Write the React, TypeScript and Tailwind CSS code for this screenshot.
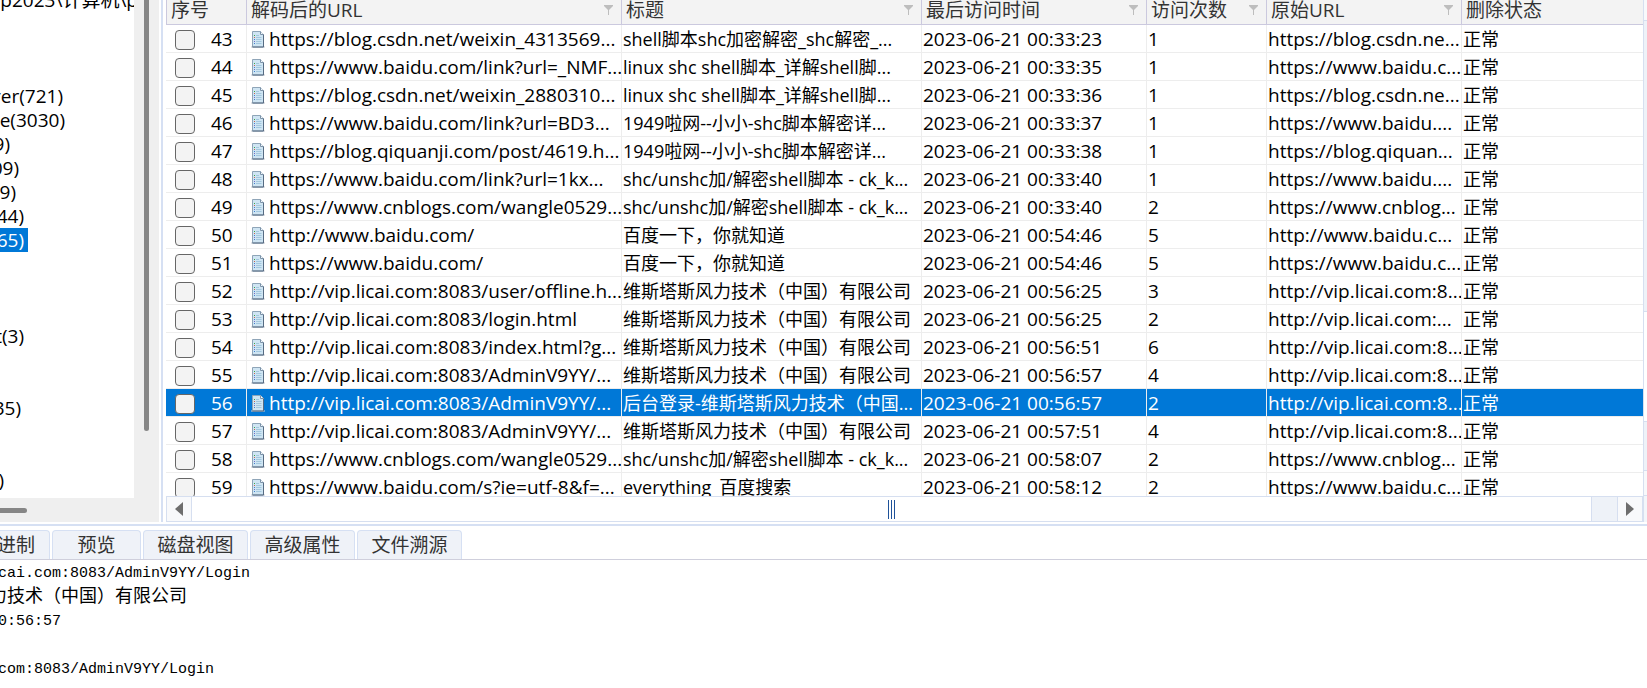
import clsx from "clsx";

type Visit = {
  id: number;
  url: string;
  title: string;
  time: string;
  count: number;
  origin: string;
  selected?: boolean;
};

const company = "维斯塔斯风力技术（中国）有限公司";

const visits: Visit[] = [
  { id: 43, url: "https://blog.csdn.net/weixin_4313569...", title: "shell脚本shc加密解密_shc解密_...", time: "2023-06-21 00:33:23", count: 1, origin: "https://blog.csdn.ne..." },
  { id: 44, url: "https://www.baidu.com/link?url=_NMF...", title: "linux shc shell脚本_详解shell脚...", time: "2023-06-21 00:33:35", count: 1, origin: "https://www.baidu.c..." },
  { id: 45, url: "https://blog.csdn.net/weixin_2880310...", title: "linux shc shell脚本_详解shell脚...", time: "2023-06-21 00:33:36", count: 1, origin: "https://blog.csdn.ne..." },
  { id: 46, url: "https://www.baidu.com/link?url=BD3...", title: "1949啦网--小小-shc脚本解密详...", time: "2023-06-21 00:33:37", count: 1, origin: "https://www.baidu...." },
  { id: 47, url: "https://blog.qiquanji.com/post/4619.h...", title: "1949啦网--小小-shc脚本解密详...", time: "2023-06-21 00:33:38", count: 1, origin: "https://blog.qiquan..." },
  { id: 48, url: "https://www.baidu.com/link?url=1kx...", title: "shc/unshc加/解密shell脚本 - ck_k...", time: "2023-06-21 00:33:40", count: 1, origin: "https://www.baidu...." },
  { id: 49, url: "https://www.cnblogs.com/wangle0529...", title: "shc/unshc加/解密shell脚本 - ck_k...", time: "2023-06-21 00:33:40", count: 2, origin: "https://www.cnblog..." },
  { id: 50, url: "http://www.baidu.com/", title: "百度一下，你就知道", time: "2023-06-21 00:54:46", count: 5, origin: "http://www.baidu.c..." },
  { id: 51, url: "https://www.baidu.com/", title: "百度一下，你就知道", time: "2023-06-21 00:54:46", count: 5, origin: "https://www.baidu.c..." },
  { id: 52, url: "http://vip.licai.com:8083/user/offline.h...", title: company, time: "2023-06-21 00:56:25", count: 3, origin: "http://vip.licai.com:8..." },
  { id: 53, url: "http://vip.licai.com:8083/login.html", title: company, time: "2023-06-21 00:56:25", count: 2, origin: "http://vip.licai.com:..." },
  { id: 54, url: "http://vip.licai.com:8083/index.html?g...", title: company, time: "2023-06-21 00:56:51", count: 6, origin: "http://vip.licai.com:8..." },
  { id: 55, url: "http://vip.licai.com:8083/AdminV9YY/...", title: company, time: "2023-06-21 00:56:57", count: 4, origin: "http://vip.licai.com:8..." },
  { id: 56, url: "http://vip.licai.com:8083/AdminV9YY/...", title: "后台登录-维斯塔斯风力技术（中国...", time: "2023-06-21 00:56:57", count: 2, origin: "http://vip.licai.com:8...", selected: true },
  { id: 57, url: "http://vip.licai.com:8083/AdminV9YY/...", title: company, time: "2023-06-21 00:57:51", count: 4, origin: "http://vip.licai.com:8..." },
  { id: 58, url: "https://www.cnblogs.com/wangle0529...", title: "shc/unshc加/解密shell脚本 - ck_k...", time: "2023-06-21 00:58:07", count: 2, origin: "https://www.cnblog..." },
  { id: 59, url: "https://www.baidu.com/s?ie=utf-8&f=...", title: "everything_百度搜索", time: "2023-06-21 00:58:12", count: 2, origin: "https://www.baidu.c..." },
];

const columns = [
  { label: "序号", width: "w-[81px]", filter: false },
  { label: "解码后的URL", width: "w-[375px]", filter: true },
  { label: "标题", width: "w-[300px]", filter: true },
  { label: "最后访问时间", width: "w-[225px]", filter: true },
  { label: "访问次数", width: "w-[120px]", filter: true },
  { label: "原始URL", width: "w-[195px]", filter: true },
  { label: "删除状态", width: "", filter: false },
];

// The tree is scrolled right, so only the tail of each label is in view
const treeRows = [
  { text: "up2023\\计算机\\p", width: "w-[138px]" },
  { text: "", width: "" },
  { text: "", width: "" },
  { text: "", width: "" },
  { text: "rer(721)", width: "w-[63px]" },
  { text: "e(3030)", width: "w-[65px]" },
  { text: "9)", width: "w-2.5" },
  { text: "09)", width: "w-[19px]" },
  { text: "9)", width: "w-4" },
  { text: "44)", width: "w-6" },
  { text: "65)", width: "w-7", selected: true },
  { text: "", width: "" },
  { text: "", width: "" },
  { text: "", width: "" },
  { text: "t(3)", width: "w-6" },
  { text: "", width: "" },
  { text: "", width: "" },
  { text: "35)", width: "w-[21px]" },
  { text: "", width: "" },
  { text: "", width: "" },
  { text: ")", width: "w-1" },
];

const tabs = [
  { label: "十六进制", width: "w-[50px]" },
  { label: "预览", width: "w-[89px]" },
  { label: "磁盘视图", width: "w-[105px]" },
  { label: "高级属性", width: "w-[105px]" },
  { label: "文件溯源", width: "w-[105px]" },
];

const details = [
  { text: "cai.com:8083/AdminV9YY/Login", width: "w-[250px]" },
  { text: "力技术（中国）有限公司", width: "w-[187px]" },
  { text: "0:56:57", width: "w-[61px]" },
  { text: "", width: "" },
  { text: "com:8083/AdminV9YY/Login", width: "w-[214px]" },
];

function FilterIcon() {
  return (
    <svg width="9" height="10" viewBox="0 0 9 10" fill="#bdbdbd" aria-hidden="true">
      <path d="M0 0h9v1L5 5v5H4V5L0 1z" />
    </svg>
  );
}

function DocIcon() {
  return (
    <svg width="14" height="17" viewBox="0 0 14 17" className="shrink-0" aria-hidden="true">
      <path d="M0 15.5h14v1H0z" fill="#c9cdd2" />
      <path d="M1.5.5h8l3 3v12.5h-11z" fill="#cfe5f3" stroke="#8fa5b8" />
      <path d="M12.5 3.5V16" stroke="#566b82" />
      <path d="M1.5 16h11" stroke="#566b82" />
      <path d="M9.5.5v3h3" fill="#f4f9fd" stroke="#7c93a8" />
      <path d="M5 4.5h3M5 6.5h5.5M5 8.5h5.5M5 10.5h5.5M5 12.5h5.5" stroke="#a3c8df" />
      <path d="M3 4.5h1" stroke="#3aa845" />
      <path d="M3 6.5h1" stroke="#c8604c" />
      <path d="M3 8.5h1M3 12.5h1" stroke="#3f7fd0" />
      <path d="M3 10.5h1" stroke="#7a67c0" />
    </svg>
  );
}

function TreePane() {
  return (
    <aside className="flex w-[159px] shrink-0 flex-col bg-[#efefef]">
      <div className="flex min-h-0 flex-1">
        <div className="min-w-0 flex-1 overflow-hidden bg-white">
          <ul className="-mt-3">
            {treeRows.map((row, i) => (
              <li key={i} className="flex h-6">
                <span
                  className={clsx(
                    "flex shrink-0 justify-end overflow-hidden whitespace-nowrap text-[19px] leading-6",
                    row.width,
                    row.selected && "bg-[#0078d7] pr-1 text-white",
                  )}
                >
                  {row.text}
                </span>
              </li>
            ))}
          </ul>
        </div>
        <div className="flex w-[25px] justify-center pb-[67px]">
          <div className="w-[5px] rounded-b-full bg-[#868686]" />
        </div>
      </div>
      <div className="flex h-6 items-center">
        <div className="h-[5px] w-[27px] rounded-r-full bg-[#868686]" />
      </div>
    </aside>
  );
}

function HistoryTable() {
  return (
    <table className="w-full table-fixed border-separate border-spacing-0 whitespace-nowrap text-[19px]">
      <thead>
        <tr>
          {columns.map((col, i) => (
            <th
              key={col.label}
              className={clsx(
                "h-[25px] border-b border-[#cbc9de] bg-[#f3f3f3] p-0 text-left align-top font-normal text-[#333]",
                col.width,
                i === 0 && "border-l",
                i < columns.length - 1 && "border-r",
              )}
            >
              <div className="flex h-5 items-center justify-between pl-1 pr-2 leading-5">
                <span>{col.label}</span>
                {col.filter && <FilterIcon />}
              </div>
            </th>
          ))}
        </tr>
      </thead>
      <tbody>
        {visits.map((v) => (
          <tr
            key={v.id}
            className={clsx(
              "[&>td]:h-7 [&>td]:overflow-hidden [&>td]:border-b [&>td]:border-[#ededed] [&>td]:pb-0 [&>td]:pt-0.5 [&>td]:pr-0 [&>td]:leading-[25px] [&>td:not(:last-child)]:border-r",
              v.selected && "bg-[#0078d7] text-white",
            )}
          >
            <td className="pl-[9px]">
              <label className="flex items-center gap-4">
                <input
                  type="checkbox"
                  className="size-5 appearance-none rounded-[4px] border border-[#666] bg-[#f3f3f3]"
                />
                {v.id}
              </label>
            </td>
            <td className="pl-1">
              <div className="flex items-center gap-1">
                <DocIcon />
                {v.url}
              </div>
            </td>
            <td className="pl-px text-[18px]">{v.title}</td>
            <td className="pl-px">{v.time}</td>
            <td className="pl-px">{v.count}</td>
            <td className="pl-px">{v.origin}</td>
            <td className="pl-px text-[18px]">正常</td>
          </tr>
        ))}
      </tbody>
    </table>
  );
}

function HorizontalScrollbar() {
  return (
    <div className="flex h-[26px] shrink-0 border border-[#d6dff0]">
      <button aria-label="向左滚动" className="flex w-[25px] items-center justify-center border-r border-[#d6dff0] bg-[#f8f9fb]">
        <svg width="8" height="14" viewBox="0 0 8 14" fill="#6e6e6e">
          <path d="M8 0v14L0 7z" />
        </svg>
      </button>
      <div className="flex flex-1 items-center justify-center gap-0.5 border-r border-[#d6dff0] bg-white">
        <i className="h-[19px] w-px bg-[#1f5299]" />
        <i className="h-[19px] w-px bg-[#1f5299]" />
        <i className="h-[19px] w-px bg-[#1f5299]" />
      </div>
      <div className="w-[25px] bg-[#eef2f8]" />
      <button aria-label="向右滚动" className="flex w-[25px] items-center justify-center border-l border-[#d6dff0] bg-[#f8f9fb]">
        <svg width="8" height="14" viewBox="0 0 8 14" fill="#6e6e6e">
          <path d="M0 0v14l8-7z" />
        </svg>
      </button>
    </div>
  );
}

function VerticalScrollbar() {
  return (
    <div className="flex w-1 shrink-0 flex-col border-l border-[#d6dff0]">
      <div className="h-[21px] border-b border-[#d6dff0] bg-[#f8f9fb]" />
      <div className="h-[291px] border-b border-[#d6dff0] bg-[#eef2f8]" />
      <div className="flex-1 bg-white" />
      <div className="h-[50px] border-y border-[#d6dff0] bg-[#eef2f8]" />
      <div className="h-[25px] border-b border-[#d6dff0] bg-[#f8f9fb]" />
      <div className="h-[26px] bg-[#f3f6fa]" />
    </div>
  );
}

export default function App() {
  return (
    <div className="flex h-screen flex-col overflow-hidden bg-white font-['Open_Sans','Noto_Sans_CJK_SC',sans-serif] text-black">
      <main className="flex min-h-0 flex-1 pb-0.5">
        <TreePane />
        <div className="ml-0.5 mr-[3px] w-0.5 shrink-0 bg-[#d6e0f3]" />
        <section className="flex min-w-0 flex-1 flex-col">
          <div className="min-h-0 flex-1 overflow-hidden">
            <HistoryTable />
          </div>
          <HorizontalScrollbar />
        </section>
        <VerticalScrollbar />
      </main>

      <section className="h-[164px] shrink-0 border-t-2 border-[#d6e0f3] pt-1">
        <div className="flex h-[30px] gap-0.5 border-b border-[#cfcfdc]">
          {tabs.map((tab, i) => (
            <button
              key={tab.label}
              className={clsx(
                "flex shrink-0 items-center overflow-hidden whitespace-nowrap border border-b-0 border-[#d6e0f3] bg-[#eff2f8] text-[19px] leading-7 text-[#333]",
                tab.width,
                i === 0 ? "justify-end rounded-tr-[4px] border-l-0 pr-3.5" : "justify-center rounded-t-[4px]",
              )}
            >
              {tab.label}
            </button>
          ))}
        </div>
        <div className="pt-px font-['Liberation_Mono','Noto_Sans_CJK_SC',monospace]">
          {details.map((line, i) => (
            <p
              key={i}
              className={clsx(
                "flex h-6 justify-end overflow-hidden whitespace-nowrap",
                i === 1 ? "text-[18px] leading-6" : "text-[15px] leading-[26px]",
                line.width,
              )}
            >
              {line.text}
            </p>
          ))}
        </div>
      </section>
    </div>
  );
}
